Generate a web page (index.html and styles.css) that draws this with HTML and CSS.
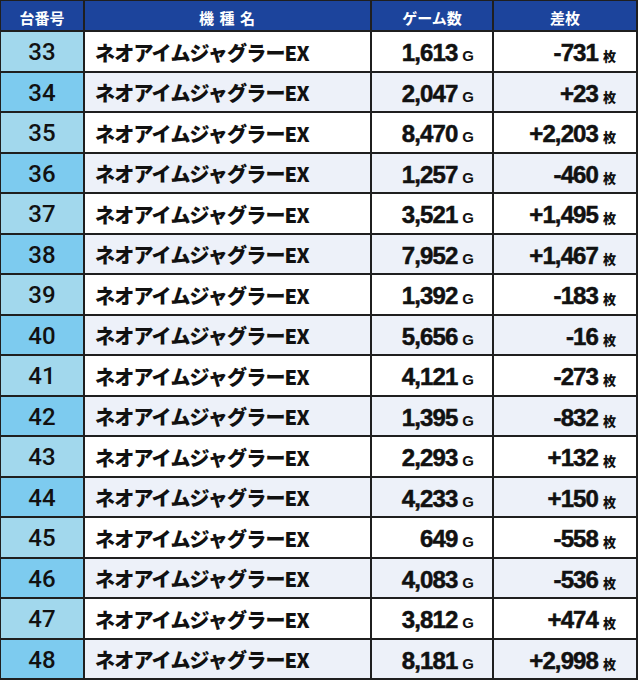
FILE: index.html
```html
<!DOCTYPE html>
<html lang="ja">
<head>
<meta charset="utf-8">
<title>台番号一覧</title>
<link rel="stylesheet" href="styles.css">
</head>
<body>
<div class="table">
  <div class="row head">
    <div class="cell c-no">台番号</div>
    <div class="cell c-name">機 種 名</div>
    <div class="cell c-games">ゲーム数</div>
    <div class="cell c-diff">差枚</div>
  </div>
  <div class="row"><div class="cell c-no">33</div><div class="cell c-name">ネオアイムジャグラーEX</div><div class="cell c-games"><span class="num">1,613</span><span class="unit-g">G</span></div><div class="cell c-diff"><span class="num">-731</span><span class="unit-m">枚</span></div></div>
  <div class="row"><div class="cell c-no">34</div><div class="cell c-name">ネオアイムジャグラーEX</div><div class="cell c-games"><span class="num">2,047</span><span class="unit-g">G</span></div><div class="cell c-diff"><span class="num">+23</span><span class="unit-m">枚</span></div></div>
  <div class="row"><div class="cell c-no">35</div><div class="cell c-name">ネオアイムジャグラーEX</div><div class="cell c-games"><span class="num">8,470</span><span class="unit-g">G</span></div><div class="cell c-diff"><span class="num">+2,203</span><span class="unit-m">枚</span></div></div>
  <div class="row"><div class="cell c-no">36</div><div class="cell c-name">ネオアイムジャグラーEX</div><div class="cell c-games"><span class="num">1,257</span><span class="unit-g">G</span></div><div class="cell c-diff"><span class="num">-460</span><span class="unit-m">枚</span></div></div>
  <div class="row"><div class="cell c-no">37</div><div class="cell c-name">ネオアイムジャグラーEX</div><div class="cell c-games"><span class="num">3,521</span><span class="unit-g">G</span></div><div class="cell c-diff"><span class="num">+1,495</span><span class="unit-m">枚</span></div></div>
  <div class="row"><div class="cell c-no">38</div><div class="cell c-name">ネオアイムジャグラーEX</div><div class="cell c-games"><span class="num">7,952</span><span class="unit-g">G</span></div><div class="cell c-diff"><span class="num">+1,467</span><span class="unit-m">枚</span></div></div>
  <div class="row"><div class="cell c-no">39</div><div class="cell c-name">ネオアイムジャグラーEX</div><div class="cell c-games"><span class="num">1,392</span><span class="unit-g">G</span></div><div class="cell c-diff"><span class="num">-183</span><span class="unit-m">枚</span></div></div>
  <div class="row"><div class="cell c-no">40</div><div class="cell c-name">ネオアイムジャグラーEX</div><div class="cell c-games"><span class="num">5,656</span><span class="unit-g">G</span></div><div class="cell c-diff"><span class="num">-16</span><span class="unit-m">枚</span></div></div>
  <div class="row"><div class="cell c-no">41</div><div class="cell c-name">ネオアイムジャグラーEX</div><div class="cell c-games"><span class="num">4,121</span><span class="unit-g">G</span></div><div class="cell c-diff"><span class="num">-273</span><span class="unit-m">枚</span></div></div>
  <div class="row"><div class="cell c-no">42</div><div class="cell c-name">ネオアイムジャグラーEX</div><div class="cell c-games"><span class="num">1,395</span><span class="unit-g">G</span></div><div class="cell c-diff"><span class="num">-832</span><span class="unit-m">枚</span></div></div>
  <div class="row"><div class="cell c-no">43</div><div class="cell c-name">ネオアイムジャグラーEX</div><div class="cell c-games"><span class="num">2,293</span><span class="unit-g">G</span></div><div class="cell c-diff"><span class="num">+132</span><span class="unit-m">枚</span></div></div>
  <div class="row"><div class="cell c-no">44</div><div class="cell c-name">ネオアイムジャグラーEX</div><div class="cell c-games"><span class="num">4,233</span><span class="unit-g">G</span></div><div class="cell c-diff"><span class="num">+150</span><span class="unit-m">枚</span></div></div>
  <div class="row"><div class="cell c-no">45</div><div class="cell c-name">ネオアイムジャグラーEX</div><div class="cell c-games"><span class="num">649</span><span class="unit-g">G</span></div><div class="cell c-diff"><span class="num">-558</span><span class="unit-m">枚</span></div></div>
  <div class="row"><div class="cell c-no">46</div><div class="cell c-name">ネオアイムジャグラーEX</div><div class="cell c-games"><span class="num">4,083</span><span class="unit-g">G</span></div><div class="cell c-diff"><span class="num">-536</span><span class="unit-m">枚</span></div></div>
  <div class="row"><div class="cell c-no">47</div><div class="cell c-name">ネオアイムジャグラーEX</div><div class="cell c-games"><span class="num">3,812</span><span class="unit-g">G</span></div><div class="cell c-diff"><span class="num">+474</span><span class="unit-m">枚</span></div></div>
  <div class="row"><div class="cell c-no">48</div><div class="cell c-name">ネオアイムジャグラーEX</div><div class="cell c-games"><span class="num">8,181</span><span class="unit-g">G</span></div><div class="cell c-diff"><span class="num">+2,998</span><span class="unit-m">枚</span></div></div>
</div>
</body>
</html>
```

FILE: styles.css
```css
html, body {
  margin: 0;
  padding: 0;
  background: #ffffff;
}

.table {
  width: 635px;
  height: 677px;
  display: grid;
  grid-template-columns: 82px 285px 120px 142px;
  grid-template-rows: 29px repeat(16, 1fr);
  gap: 2px;
  background: #1f1f1f;
  border-top: 1px solid #1f1f1f;
  border-left: 1px solid #1f1f1f;
  border-right: 2px solid #1f1f1f;
  border-bottom: 2px solid #1f1f1f;
  color: #111111;
}

.row {
  display: contents;
}

.cell {
  display: flex;
  align-items: center;
  background: #ffffff;
  min-width: 0;
  overflow: hidden;
  white-space: nowrap;
}

.row:nth-child(odd) .cell {
  background: #edf1f9;
}

.row .c-no {
  justify-content: center;
  background: #a2d8ed;
  font-family: Roboto, "Liberation Sans", sans-serif;
  font-weight: 500;
  font-size: 24px;
  padding-top: 2px;
}

.row:nth-child(odd) .c-no {
  background: #7dcbef;
}

.c-name {
  padding-left: 10px;
  padding-top: 2px;
  font-family: "Noto Sans CJK JP", sans-serif;
  font-weight: 900;
  font-size: 20px;
  letter-spacing: -0.8px;
}

.c-games,
.c-diff {
  justify-content: flex-end;
  align-items: baseline;
  padding-top: 7px;
  font-family: "Liberation Sans", Arial, sans-serif;
  font-weight: 700;
}

.c-games {
  padding-right: 18px;
}

.c-diff {
  padding-right: 20px;
}

.num {
  font-size: 24px;
  letter-spacing: -0.9px;
  -webkit-text-stroke: 0.5px #111111;
}

.unit-g {
  font-size: 15px;
  margin-left: 5px;
}

.unit-m {
  font-family: "Noto Sans CJK JP", sans-serif;
  font-size: 13px;
  font-weight: 900;
  margin-left: 5px;
}

.row.head .cell {
  background: #1c449c;
  color: #ffffff;
  justify-content: center;
  align-items: center;
  padding: 4px 0 0 0;
  font-family: "Noto Sans CJK JP", sans-serif;
  font-weight: 700;
  font-size: 15px;
  letter-spacing: 0;
}

.row.head .c-name {
  letter-spacing: 1px;
}
```
